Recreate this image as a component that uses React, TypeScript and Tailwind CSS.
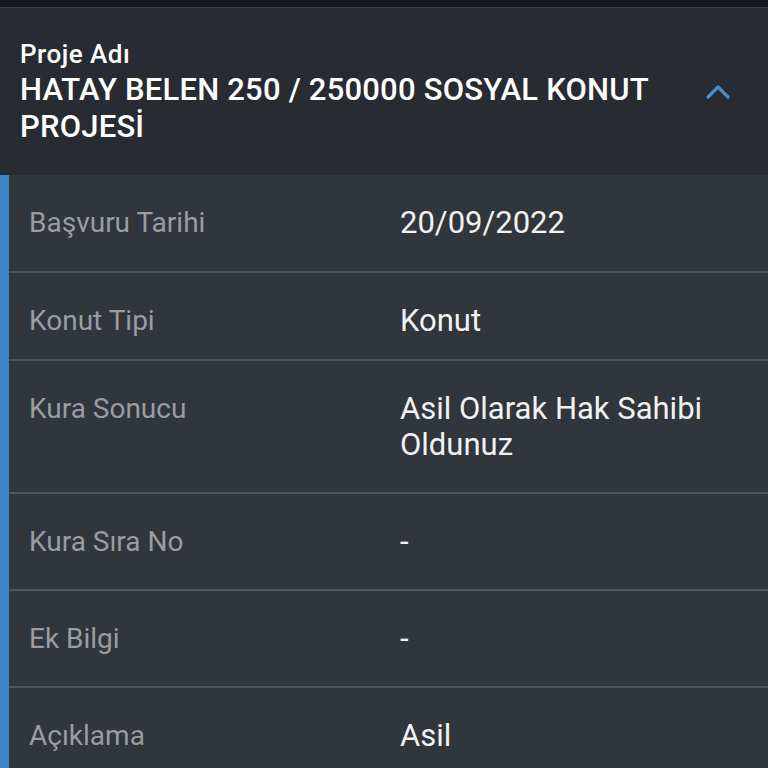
const rows = [
  { label: "Başvuru Tarihi", value: "20/09/2022", pad: "pt-[30px] pb-[30px]" },
  { label: "Konut Tipi", value: "Konut", pad: "pt-[30px] pb-[20px]" },
  { label: "Kura Sonucu", value: "Asil Olarak Hak Sahibi Oldunuz", pad: "pt-[30px] pb-[29px]" },
  { label: "Kura Sıra No", value: "-", pad: "pt-[30px] pb-[29px]" },
  { label: "Ek Bilgi", value: "-", pad: "pt-[30px] pb-[29px]" },
  { label: "Açıklama", value: "Asil", pad: "pt-[30px] pb-[29px]" },
];

export default function App() {
  return (
    <div
      className="h-[768px] w-[768px] overflow-hidden bg-[#31353c]"
      style={{ fontFamily: "Roboto, 'Liberation Sans', sans-serif" }}
    >
      {/* status strip */}
      <div className="h-[7px] bg-[#15181c]" />
      <div className="h-px bg-[#3d4148]" />

      {/* accordion header */}
      <div className="flex items-center bg-[#282b31] pl-5 pr-[38px] pt-[31px] pb-[30px]">
        <div className="flex-1 pr-10">
          <p className="text-[26px] leading-[30px] font-medium tracking-[0.5px] text-white">Proje Adı</p>
          <h1 className="mt-[2px] text-[31px] leading-[37px] font-medium tracking-[0.2px] text-white">
            HATAY BELEN 250 / 250000 SOSYAL KONUT PROJESİ
          </h1>
        </div>
        <svg width="24" height="16" viewBox="0 0 24 16" fill="none">
          <polyline
            points="2,13 12,3 22,13"
            stroke="#4a8bcd"
            strokeWidth="3.2"
            strokeLinecap="round"
            strokeLinejoin="round"
          />
        </svg>
      </div>

      {/* details */}
      <div className="flex">
        <div className="w-[9px] shrink-0 bg-[#3b83c4]" />
        <div className="flex-1">
          {rows.map((r, i) => (
            <div key={r.label}>
              {i > 0 && <div className="h-[2px] bg-[#50545b]" />}
              <div className={`flex ${r.pad}`}>
                <div className="w-[391px] shrink-0 pl-[20px] text-[28px] leading-[36px] text-[#9a9ca1]">
                  {r.label}
                </div>
                <div className="flex-1 pr-5 text-[31px] leading-[36px] text-[#f2f2f2]">
                  {r.value}
                </div>
              </div>
            </div>
          ))}
        </div>
      </div>
    </div>
  );
}
